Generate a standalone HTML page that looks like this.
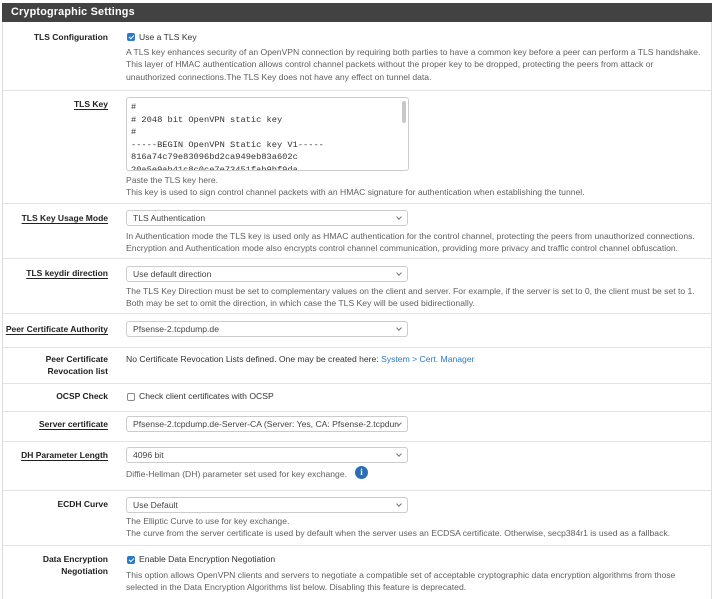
<!DOCTYPE html>
<html><head><meta charset="utf-8"><style>
*{margin:0;padding:0;box-sizing:border-box}
html,body{width:715px;height:599px;overflow:hidden}
body{background:#fff;position:relative;font-family:"Liberation Sans",Arial,sans-serif;color:#333}
.panel{position:absolute;left:2px;top:3px;width:710px;height:596px;border-left:1px solid #ddd;border-right:1px solid #ddd;background:#fff}
.hdr{position:absolute;left:2px;top:3px;width:710px;height:19px;background:#424242;color:#fff;font-weight:bold;font-size:10.8px;line-height:19px;padding-left:9px;letter-spacing:.2px}
.hr{position:absolute;left:3px;width:708px;height:1px;background:#e3e3e3}
.t{position:absolute;font-size:8.6px;line-height:12.3px;white-space:nowrap}
.l{position:absolute;right:607px;font-size:8.5px;line-height:12.3px;font-weight:bold;text-align:right;white-space:nowrap;color:#222}
.u{text-decoration:underline;text-decoration-thickness:1px;text-underline-offset:2px}
.d{color:#606060}
.sel{position:absolute;left:126px;width:282px;height:16px;border:1px solid #ccc;border-radius:3px;font-size:8.6px;line-height:14px;padding-left:6px;color:#444;white-space:nowrap;overflow:hidden}
.sel:after{content:"";position:absolute;right:6px;top:4px;width:3px;height:3px;border-right:1px solid #777;border-bottom:1px solid #777;transform:rotate(45deg);background:#fff}
.cb{position:absolute;left:127px;width:8px;height:8px;border-radius:2px}
.on{background:#2a7ac7}
.on:after{content:"";position:absolute;left:2.5px;top:1px;width:2px;height:4px;border-right:1.3px solid #fff;border-bottom:1.3px solid #fff;transform:rotate(45deg)}
.off{border:1px solid #888;background:#fff}
.ta{position:absolute;left:126px;top:97px;width:283px;height:74px;border:1px solid #ccc;border-radius:3px;overflow:hidden;font-family:"Liberation Mono","DejaVu Sans Mono",monospace;font-size:8.7px;line-height:12.5px;padding:3px 0 0 4px;color:#333;white-space:pre}
.sb{position:absolute;right:2px;top:3px;width:4px;height:22px;background:#c8c8c8;border-radius:2px}
a{color:#2a7ac7;text-decoration:none}
.info{position:absolute;left:355px;top:466px;width:13px;height:13px;border-radius:50%;background:#2a6fb5;color:#fff;font-weight:bold;font-size:9px;line-height:13px;text-align:center;font-family:"Liberation Serif",serif}
</style></head><body>
<div class="panel"></div>
<div class="hdr">Cryptographic Settings</div>

<div class="l" style="top:31px">TLS Configuration</div>
<div class="cb on" style="top:33px"></div>
<div class="t" style="left:139px;top:31px;color:#333">Use a TLS Key</div>
<div class="t d" style="left:126px;top:46px">A TLS key enhances security of an OpenVPN connection by requiring both parties to have a common key before a peer can perform a TLS handshake.<br>This layer of HMAC authentication allows control channel packets without the proper key to be dropped, protecting the peers from attack or<br>unauthorized connections.The TLS Key does not have any effect on tunnel data.</div>
<div class="hr" style="top:90px"></div>

<div class="l u" style="top:98px">TLS Key</div>
<div class="ta">#
# 2048 bit OpenVPN static key
#
-----BEGIN OpenVPN Static key V1-----
816a74c79e83096bd2ca949eb83a602c
20a5e9ab41c8c0ce7e73451fab9bf9da<div class="sb"></div></div>
<div class="t d" style="left:126px;top:174px">Paste the TLS key here.<br>This key is used to sign control channel packets with an HMAC signature for authentication when establishing the tunnel.</div>
<div class="hr" style="top:203px"></div>

<div class="l u" style="top:212px">TLS Key Usage Mode</div>
<div class="sel" style="top:210px">TLS Authentication</div>
<div class="t d" style="left:126px;top:230px">In Authentication mode the TLS key is used only as HMAC authentication for the control channel, protecting the peers from unauthorized connections.<br>Encryption and Authentication mode also encrypts control channel communication, providing more privacy and traffic control channel obfuscation.</div>
<div class="hr" style="top:258px"></div>

<div class="l u" style="top:267px">TLS keydir direction</div>
<div class="sel" style="top:266px">Use default direction</div>
<div class="t d" style="left:126px;top:285px">The TLS Key Direction must be set to complementary values on the client and server. For example, if the server is set to 0, the client must be set to 1.<br>Both may be set to omit the direction, in which case the TLS Key will be used bidirectionally.</div>
<div class="hr" style="top:313px"></div>

<div class="l u" style="top:323px">Peer Certificate Authority</div>
<div class="sel" style="top:321px">Pfsense-2.tcpdump.de</div>
<div class="hr" style="top:347px"></div>

<div class="l" style="top:353px">Peer Certificate<br>Revocation list</div>
<div class="t" style="left:126px;top:353px">No Certificate Revocation Lists defined. One may be created here: <a>System &gt; Cert. Manager</a></div>
<div class="hr" style="top:383px"></div>

<div class="l" style="top:390px">OCSP Check</div>
<div class="cb off" style="top:393px"></div>
<div class="t" style="left:139px;top:390px">Check client certificates with OCSP</div>
<div class="hr" style="top:411px"></div>

<div class="l u" style="top:418px">Server certificate</div>
<div class="sel" style="top:416px;padding-right:16px">Pfsense-2.tcpdump.de-Server-CA (Server: Yes, CA: Pfsense-2.tcpdun</div>
<div class="hr" style="top:441px"></div>

<div class="l u" style="top:449px">DH Parameter Length</div>
<div class="sel" style="top:447px">4096 bit</div>
<div class="t d" style="left:126px;top:468px">Diffie-Hellman (DH) parameter set used for key exchange.</div>
<div class="info">i</div>
<div class="hr" style="top:490px"></div>

<div class="l" style="top:498px">ECDH Curve</div>
<div class="sel" style="top:497px">Use Default</div>
<div class="t d" style="left:126px;top:515px">The Elliptic Curve to use for key exchange.<br>The curve from the server certificate is used by default when the server uses an ECDSA certificate. Otherwise, secp384r1 is used as a fallback.</div>
<div class="hr" style="top:545px"></div>

<div class="l" style="top:553px">Data Encryption<br>Negotiation</div>
<div class="cb on" style="top:556px"></div>
<div class="t" style="left:139px;top:553px">Enable Data Encryption Negotiation</div>
<div class="t d" style="left:126px;top:569px">This option allows OpenVPN clients and servers to negotiate a compatible set of acceptable cryptographic data encryption algorithms from those<br>selected in the Data Encryption Algorithms list below. Disabling this feature is deprecated.</div>
</body></html>
